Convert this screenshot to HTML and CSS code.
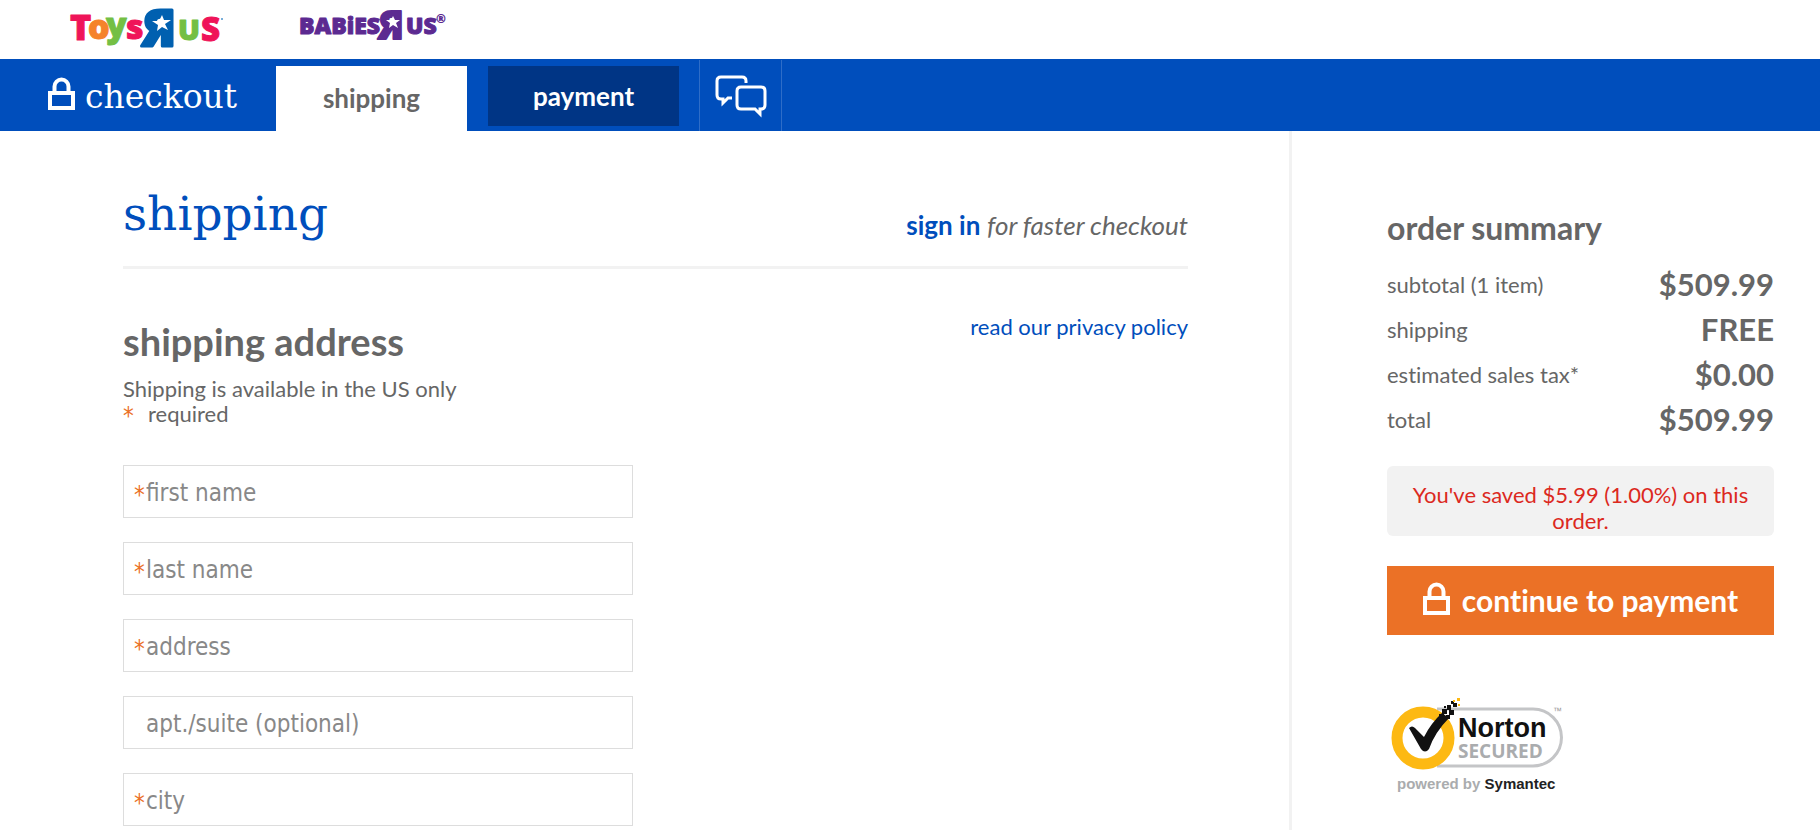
FILE: index.html
```html
<!DOCTYPE html>
<html lang="en">
<head>
<meta charset="utf-8">
<title>Checkout - shipping</title>
<link rel="stylesheet" href="styles.css">
</head>
<body>
<svg class="defs" width="0" height="0" aria-hidden="true">
  <symbol id="lock" viewBox="0 0 27 33">
    <path d="M6.500 15V9.500a7 7 0 0 1 14 0V15" fill="none" stroke="currentColor" stroke-width="4"/>
    <path d="M0 14h27v19H0zM4 18v11h19V18z" fill="currentColor" fill-rule="evenodd"/>
  </symbol>
</svg>
<header>
  <div class="brands">
    <a class="brand" href="#" aria-label="Toys R Us">
      <svg width="155" height="50" viewBox="0 0 155 50">
        <g class="toys">
          <text x="1" y="33" class="pink t-cap">T</text>
          <text x="19" y="32" class="orange">o</text>
          <text x="37" y="30" class="green">y</text>
          <text x="57" y="32" class="pink">s</text>
          <text x="109" y="33" class="green t-u">U</text>
          <text x="132" y="34" class="pink t-s">S</text>
          <text x="73" y="39" class="blue t-r">Я</text>
        </g>
        <path class="star" d="M93 8l2 5 7 0-6 4 3 6-6-3-5 4 1-6-6-4 7 0z"/>
        <circle cx="153" cy="12" r="1" fill="#4d93cc"/>
      </svg>
    </a>
    <a class="brand" href="#" aria-label="Babies R Us">
      <svg width="155" height="50" viewBox="0 0 155 50">
        <g class="babies">
          <text x="1" y="27">BABiES</text>
          <text x="80" y="32" class="b-r">Я</text>
          <text x="108" y="27">US</text>
          <text x="138" y="16" class="b-reg">®</text>
        </g>
        <path class="star" d="M95 9l2 4 5 0-4 3 2 5-5-3-4 3 1-5-4-3 5 0z"/>
      </svg>
    </a>
  </div>
  <nav class="bar" aria-label="Checkout">
    <div class="checkout"><svg width="27" height="33" aria-hidden="true"><use href="#lock"/></svg><span>checkout</span></div>
    <a class="tab current" href="#" aria-current="step">shipping</a>
    <a class="tab next" href="#">payment</a>
    <button class="chat" type="button" aria-label="Chat">
      <svg width="52" height="42" viewBox="0 0 52 42" fill="none" stroke="#fff" stroke-width="3">
        <path d="M31 8V6q0-4-4-4H6Q2 2 2 6v14q0 4 4 4h2v4l5-5h4"/>
        <path d="M26 12h20q4 0 4 4v14q0 4-4 4h-1v5l-5-5H26q-4 0-4-4V16q0-4 4-4z"/>
      </svg>
    </button>
  </nav>
</header>
<div class="page">
  <main>
    <div class="title">
      <h1>shipping</h1>
      <p><a href="#">sign in</a> <em>for faster checkout</em></p>
    </div>
    <div class="section">
      <div>
        <h2>shipping address</h2>
        <p>Shipping is available in the US only</p>
        <p class="required"><span class="mark">*</span><span>required</span></p>
      </div>
      <a class="policy" href="#">read our privacy policy</a>
    </div>
    <form>
      <label class="field"><span class="mark">*</span><input type="text" placeholder="first name" aria-label="first name" required></label>
      <label class="field"><span class="mark">*</span><input type="text" placeholder="last name" aria-label="last name" required></label>
      <label class="field"><span class="mark">*</span><input type="text" placeholder="address" aria-label="address" required></label>
      <label class="field"><span class="mark"></span><input type="text" placeholder="apt./suite (optional)" aria-label="apt./suite (optional)"></label>
      <label class="field"><span class="mark">*</span><input type="text" placeholder="city" aria-label="city" required></label>
    </form>
  </main>
  <aside>
    <h2>order summary</h2>
    <dl>
      <div><dt>subtotal (1 item)</dt><dd>$509.99</dd></div>
      <div><dt>shipping</dt><dd>FREE</dd></div>
      <div><dt>estimated sales tax*</dt><dd>$0.00</dd></div>
      <div><dt>total</dt><dd>$509.99</dd></div>
    </dl>
    <p class="saved">You've saved $5.99 (1.00%) on this order.</p>
    <button class="continue" type="button"><svg width="27" height="33" aria-hidden="true"><use href="#lock"/></svg><span>continue to payment</span></button>
    <a class="norton" href="#" aria-label="Norton Secured, powered by Symantec">
      <svg width="180" height="98" viewBox="0 0 180 98">
        <path d="M50 12h96a28 28 0 0 1 0 57H50" fill="#fff" stroke="#c4c5c7" stroke-width="3"/>
        <circle cx="36" cy="41" r="26" fill="#fff" stroke="#fdb913" stroke-width="11"/>
        <path d="M22 31q3-3 6 0l9 9q7-14 18-24l7 5Q48 35 42 52q-4 5-8 0z" fill="#111"/>
        <path d="M55 12h5v5h-5zM60 8h4v5h-4zM62 13h5v5h-5zM66 6h4v4h-4zM59 18h4v4h-4zM52 17h5v6h-5zM64 4h3v3h-3zM57 9h2v2h-2z" fill="#111"/>
        <path d="M70 1h3v3h-3zM66 3h2v2h-2zM71 7h2v2h-2z" fill="#fdb913"/>
        <text x="71" y="40" class="n-name">Norton</text>
        <text x="71" y="61" class="n-sec">SECURED</text>
        <text x="166" y="17" class="n-tm">™</text>
        <text x="10" y="92" class="n-by">powered by <tspan fill="#222">Symantec</tspan></text>
      </svg>
    </a>
  </aside>
</div>
</body>
</html>
```

FILE: styles.css
```css
* { box-sizing: border-box; }
body { margin: 0; background: #fff; color: #666; font: 22px/25px Lato, sans-serif; font-variant-ligatures: none; }
h1, h2, p, dl, dd { margin: 0; }
a { color: #004ebc; text-decoration: none; }
button { border: 0; cursor: pointer; font-family: inherit; font-variant-ligatures: inherit; }
svg { display: block; flex: none; overflow: visible; }
.defs { position: absolute; }

.brands { display: flex; gap: 74px; padding: 7px 0 2px 69px; }

.brand text { stroke-linejoin: round; }
.toys text { font: 900 34px "Noto Sans", sans-serif; stroke-width: 1; }
.toys .t-cap { font-size: 36px; }
.toys .t-u { font-size: 29px; }
.toys .t-s { font-size: 33px; }
.toys .t-r { font-size: 50px; stroke-width: 3; }
.pink { fill: #ef1459; stroke: #ef1459; }
.orange { fill: #f5832a; stroke: #f5832a; }
.green { fill: #74bf44; stroke: #74bf44; }
.blue { fill: #0060b0; stroke: #0060b0; }
.babies text { font: 900 23px "Noto Sans", sans-serif; fill: #5c2a91; stroke: #5c2a91; }
.babies .b-r { font-size: 38px; stroke-width: 2; }
.babies .b-reg { font-size: 12px; stroke: none; }
.brand .star { fill: #fff; }

.bar { display: flex; align-items: flex-start; height: 72px; padding-left: 48px; background: #004ebc; color: #fff; }
.checkout { display: flex; align-items: center; gap: 10px; width: 228px; padding-top: 15px; font: 33px/46px "DejaVu Serif", serif; }
.checkout svg { margin-bottom: 8px; }
.tab { width: 191px; margin-top: 7px; text-align: center; font-size: 26px; font-weight: 700; }
.current { height: 65px; line-height: 65px; background: #fff; color: #666; }
.next { height: 60px; margin-left: 21px; line-height: 60px; background: #003585; color: #fff; }
.chat { height: 71px; width: 83px; margin: 1px 0 0 20px; padding: 0 15px; background: none; border: solid #2e6dc8; border-width: 0 1px; }

.page { display: flex; align-items: stretch; min-height: 699px; }
main { flex: 1; padding: 51px 101px 0 123px; }
.title { display: flex; justify-content: space-between; align-items: flex-end; padding-bottom: 20px; border-bottom: 3px solid #f2f2f2; }
h1 { color: #004ebc; font: 47px/64px "DejaVu Serif", serif; }
.title p { padding-bottom: 5px; font-size: 26px; line-height: 32px; }
.title a { font-weight: 700; }
.section { display: flex; justify-content: space-between; padding-top: 45px; }
.section h2 { padding-top: 3px; margin-bottom: 11px; font-size: 38px; line-height: 48px; }
.required { display: flex; align-items: center; gap: 13px; }
.mark { width: 12px; padding-top: 6px; color: #eb7126; font: 24px/24px "DejaVu Sans Condensed", sans-serif; }
.required .mark { height: 25px; padding-top: 3px; }
form { display: grid; gap: 24px; width: 510px; max-width: 100%; padding: 39px 0 2px; }
.field { display: flex; align-items: center; height: 53px; padding: 0 10px; border: 1px solid #ddd; }
.field input { flex: 1; min-width: 0; padding: 2px 0 0; border: 0; outline: 0; background: none; color: #666; font: 24px/32px "DejaVu Sans Condensed", "DejaVu Sans", sans-serif; }
.field input::placeholder { color: #888; opacity: 1; }

aside { width: 531px; padding: 79px 46px 0 95px; border-left: 3px solid #f2f2f2; }
aside h2 { margin-bottom: 16px; font-size: 32px; line-height: 36px; }
dl div { display: flex; justify-content: space-between; align-items: center; line-height: 45px; }
dd { font-size: 31px; font-weight: 700; }
.saved { margin: 24px 0 30px; padding: 16px 20px 2px; border-radius: 6px; background: #f2f2f2; color: #dc291e; text-align: center; line-height: 26px; }
.continue { display: flex; justify-content: center; align-items: center; gap: 12px; width: 100%; height: 69px; padding-bottom: 3px; background: #eb7126; color: #fff; font-size: 30px; font-weight: 700; }
.continue svg { margin-bottom: 3px; }
.norton { display: block; padding-top: 62px; }
.n-name { font: 700 27px "Liberation Sans", sans-serif; fill: #111; }
.n-sec { font: 700 19px "Open Sans", sans-serif; fill: #aaacae; }
.n-tm { font: 9px "Liberation Sans", sans-serif; fill: #999; }
.n-by { font: 700 15px "Liberation Sans", sans-serif; fill: #aaacae; }
```
